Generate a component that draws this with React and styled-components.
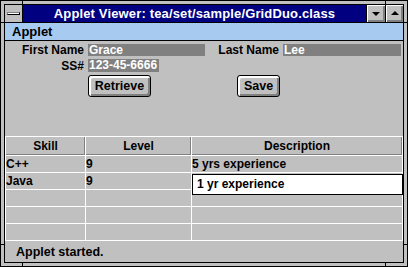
import React from "react";
import styled, { createGlobalStyle } from "styled-components";

const GlobalStyle = createGlobalStyle`
  body {
    margin: 0;
    background: #fff;
    font-family: "Liberation Sans", Arial, sans-serif;
    font-size: 12px;
    font-weight: bold;
  }
`;

const Frame = styled.div`
  position: relative;
  width: 408px;
  height: 267px;
  box-sizing: border-box;
  border: 1px solid #000;
  background: #c0c0c0;
  padding: 3px;
`;

const Notch = styled.span`
  position: absolute;
  left: ${(p) => p.$x}px;
  top: ${(p) => p.$y}px;
  width: ${(p) => p.$w}px;
  height: ${(p) => p.$h}px;
  background: #000;
`;

const Inner = styled.div`
  height: 100%;
  box-sizing: border-box;
  border: 1px solid #000;
  display: flex;
  flex-direction: column;
  background: #c0c0c0;
`;

const TitleBar = styled.div`
  display: flex;
  height: 17px;
  flex-shrink: 0;
  border-bottom: 1px solid #000;
`;

const SysBox = styled.div`
  width: 17px;
  border-right: 1px solid #000;
  background: #c0c0c0;
  display: flex;
  align-items: center;
  justify-content: center;
`;

const SysDash = styled.div`
  width: 11px;
  height: 1px;
  background: #fff;
  border: 1px solid #000;
  border-top-color: #808080;
  border-left-color: #808080;
`;

const Caption = styled.div`
  flex: 1;
  background: #000080;
  color: #fff;
  text-align: center;
  line-height: 17px;
  font-size: 13px;
  letter-spacing: 0.15px;
  white-space: nowrap;
`;

const WinButton = styled.div`
  width: ${(p) => p.$w}px;
  border-left: 1px solid #000;
  background: #c0c0c0;
  box-shadow: inset 1px 1px #fff, inset -1px -1px #808080, inset -2px -2px #808080;
  display: flex;
  align-items: center;
  justify-content: center;
`;

const Arrow = styled.div`
  width: 0;
  height: 0;
  border-left: 4px solid transparent;
  border-right: 4px solid transparent;
  ${(p) =>
    p.$up
      ? "border-bottom: 4px solid #000; margin-top: -2px;"
      : "border-top: 4px solid #000; margin-top: 1px;"}
`;

const MenuBar = styled.div`
  height: 17px;
  flex-shrink: 0;
  background: #a6caf0;
  border-bottom: 1px solid #000;
  padding-left: 7px;
  line-height: 17px;
  font-size: 13px;
`;

const Client = styled.div`
  flex: 1;
  display: flex;
  flex-direction: column;
`;

const Form = styled.div`
  display: flex;
  flex-direction: column;
  padding-top: 3px;
`;

const FieldRow = styled.div`
  display: flex;
  align-items: center;
  height: ${(p) => p.$h}px;
  margin-bottom: 3px;
`;

const Label = styled.div`
  width: ${(p) => p.$w}px;
  text-align: right;
  color: #000;
  white-space: nowrap;
  margin-right: 4px;
`;

const Field = styled.div`
  width: ${(p) => p.$w}px;
  height: 100%;
  background: #808080;
  color: #fff;
  line-height: ${(p) => p.$h}px;
  padding-left: 1px;
  box-sizing: border-box;
  white-space: nowrap;
`;

const ButtonRow = styled.div`
  display: flex;
  gap: 86px;
  padding-left: 83px;
`;

const Button = styled.button`
  width: ${(p) => p.$w}px;
  height: 22px;
  padding: 0;
  margin: 0;
  border: 1px solid #000;
  border-radius: 3px;
  background: #c0c0c0;
  box-shadow: inset 1px 1px #fff, inset 2px 2px #fff, inset -1px -1px #808080,
    inset -2px -2px #808080;
  font: bold 12.5px "Liberation Sans", Arial, sans-serif;
  color: #000;
`;

const GridWrap = styled.div`
  position: relative;
  margin-top: 39px;
`;

const Grid = styled.div`
  display: grid;
  grid-template-columns: 79px 105px 210px;
  grid-template-rows: 18px repeat(5, 16px);
  gap: 1px;
  padding: 1px;
  background: #fff;
`;

const HeadCell = styled.div`
  background: #c0c0c0;
  box-shadow: inset 0 -1px #808080, inset -1px 0 #808080;
  text-align: center;
  line-height: 18px;
`;

const Cell = styled.div`
  background: #c0c0c0;
  line-height: 16px;
  white-space: nowrap;
`;

const Editor = styled.div`
  position: absolute;
  left: 187px;
  top: 38px;
  width: 211px;
  height: 21px;
  box-sizing: border-box;
  border: 1px solid #000;
  background: #fff;
  padding-left: 4px;
  line-height: 19px;
`;

const Status = styled.div`
  flex: 1;
  display: flex;
  align-items: center;
  padding-left: 11px;
  font-size: 12.5px;
`;

const rows = [
  ["C++", "9", "5 yrs experience"],
  ["Java", "9", ""],
  ["", "", ""],
  ["", "", ""],
  ["", "", ""],
];

export default function App() {
  return (
    <>
      <GlobalStyle />
      <Frame>
        <Notch $x={21} $y={-1} $w={1} $h={4} />
        <Notch $x={384} $y={-1} $w={1} $h={4} />
        <Notch $x={-1} $y={21} $w={4} $h={1} />
        <Notch $x={403} $y={21} $w={4} $h={1} />
        <Notch $x={21} $y={262} $w={1} $h={4} />
        <Notch $x={384} $y={262} $w={1} $h={4} />
        <Notch $x={-1} $y={243} $w={4} $h={1} />
        <Notch $x={403} $y={243} $w={4} $h={1} />
        <Inner>
          <TitleBar>
            <SysBox>
              <SysDash />
            </SysBox>
            <Caption>Applet Viewer: tea/set/sample/GridDuo.class</Caption>
            <WinButton $w={18}>
              <Arrow />
            </WinButton>
            <WinButton $w={17}>
              <Arrow $up />
            </WinButton>
          </TitleBar>
          <MenuBar>Applet</MenuBar>
          <Client>
            <Form>
              <FieldRow $h={12}>
                <Label $w={79}>First Name</Label>
                <Field $w={117} $h={12}>Grace</Field>
                <Label $w={74}>Last Name</Label>
                <Field $w={118} $h={12}>Lee</Field>
              </FieldRow>
              <FieldRow $h={13}>
                <Label $w={79}>SS#</Label>
                <Field $w={71} $h={13}>123-45-6666</Field>
              </FieldRow>
              <ButtonRow>
                <Button $w={63}>Retrieve</Button>
                <Button $w={43}>Save</Button>
              </ButtonRow>
            </Form>
            <GridWrap>
              <Grid>
                <HeadCell>Skill</HeadCell>
                <HeadCell>Level</HeadCell>
                <HeadCell>Description</HeadCell>
                {rows.map((r, i) =>
                  r.map((c, j) => <Cell key={`${i}-${j}`}>{c}</Cell>)
                )}
              </Grid>
              <Editor>1 yr experience</Editor>
            </GridWrap>
            <Status>Applet started.</Status>
          </Client>
        </Inner>
      </Frame>
    </>
  );
}
